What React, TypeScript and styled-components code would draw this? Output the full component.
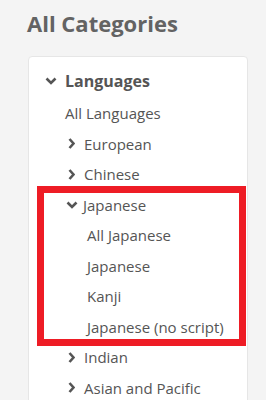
import React from "react";
import styled, { createGlobalStyle } from "styled-components";

const GlobalStyle = createGlobalStyle`
  html, body {
    margin: 0;
    padding: 0;
    background: #f4f4f4;
    font-family: "Open Sans", "Noto Sans", sans-serif;
    color: #555;
  }
`;

const Page = styled.div`
  padding: 8px 18px 0 27px;
  height: 400px;
  overflow: hidden;
  box-sizing: border-box;
`;

const Title = styled.h1`
  margin: 0;
  font-size: 22px;
  line-height: 30px;
  font-weight: 700;
  color: #636363;
`;

const Card = styled.div`
  margin: 18px 0 0 1px;
  width: 220px;
  box-sizing: border-box;
  background: #fff;
  border: 1px solid #e6e6e6;
  border-radius: 4px;
  padding: 9px 0 40px 15px;
`;

const List = styled.ul<{ $indent?: number }>`
  list-style: none;
  margin: 0;
  padding: 0 0 0 ${(p) => p.$indent ?? 0}px;
`;

const Item = styled.li<{ $marked?: boolean }>`
  position: relative;
  ${(p) =>
    p.$marked &&
    `
    &::after {
      content: "";
      position: absolute;
      top: -4px;
      bottom: -4px;
      left: -28px;
      right: 1px;
      border: 7px solid #ee1c25;
      pointer-events: none;
    }
  `}
`;

const Row = styled.div<{ $head?: boolean }>`
  display: flex;
  align-items: center;
  font-size: ${(p) => (p.$head ? 16 : 15)}px;
  font-weight: ${(p) => (p.$head ? 700 : 400)};
  line-height: ${(p) => (p.$head ? "30px" : "30.5px")};
  margin-bottom: ${(p) => (p.$head ? 2 : 0)}px;
  white-space: nowrap;
`;

const Toggle = styled.span<{ $width: number; $open?: boolean }>`
  display: inline-flex;
  align-items: center;
  justify-content: ${(p) => (p.$open ? "flex-start" : "flex-start")};
  box-sizing: border-box;
  width: ${(p) => p.$width}px;
  padding-left: ${(p) => (p.$open ? 1 : 3)}px;
  flex-shrink: 0;
  color: #555;
`;

const Chevron = ({ open }: { open?: boolean }) =>
  open ? (
    <svg width="12" height="8" viewBox="0 0 12 8">
      <path d="M1.5 1.5 L6 6 L10.5 1.5" fill="none" stroke="currentColor" strokeWidth="2.6" strokeLinecap="butt" />
    </svg>
  ) : (
    <svg width="7" height="11" viewBox="0 0 7 11">
      <path d="M1.5 1 L5.5 5.5 L1.5 10" fill="none" stroke="currentColor" strokeWidth="2.6" strokeLinecap="butt" />
    </svg>
  );

type Node = { label: string; open?: boolean; children?: Node[]; marked?: boolean };

const languages: Node[] = [
  { label: "All Languages" },
  { label: "European", children: [] },
  { label: "Chinese", children: [] },
  {
    label: "Japanese",
    open: true,
    marked: true,
    children: [
      { label: "All Japanese" },
      { label: "Japanese" },
      { label: "Kanji" },
      { label: "Japanese (no script)" },
    ],
  },
  { label: "Indian", children: [] },
  { label: "Asian and Pacific", children: [] },
];

function SubItem({ node }: { node: Node }) {
  const branch = node.children !== undefined;
  return (
    <Item $marked={node.marked}>
      <Row>
        {branch && (
          <Toggle $width={node.open ? 18 : 19} $open={node.open}>
            <Chevron open={node.open} />
          </Toggle>
        )}
        {node.label}
      </Row>
      {node.open && node.children && (
        <List $indent={22}>
          {node.children.map((c) => (
            <SubItem key={c.label} node={c} />
          ))}
        </List>
      )}
    </Item>
  );
}

export default function App() {
  return (
    <>
      <GlobalStyle />
      <Page>
        <Title>All Categories</Title>
        <Card>
          <List>
            <Item>
              <Row $head>
                <Toggle $width={21} $open>
                  <Chevron open />
                </Toggle>
                Languages
              </Row>
              <List $indent={21}>
                {languages.map((n) => (
                  <SubItem key={n.label} node={n} />
                ))}
              </List>
            </Item>
          </List>
        </Card>
      </Page>
    </>
  );
}
